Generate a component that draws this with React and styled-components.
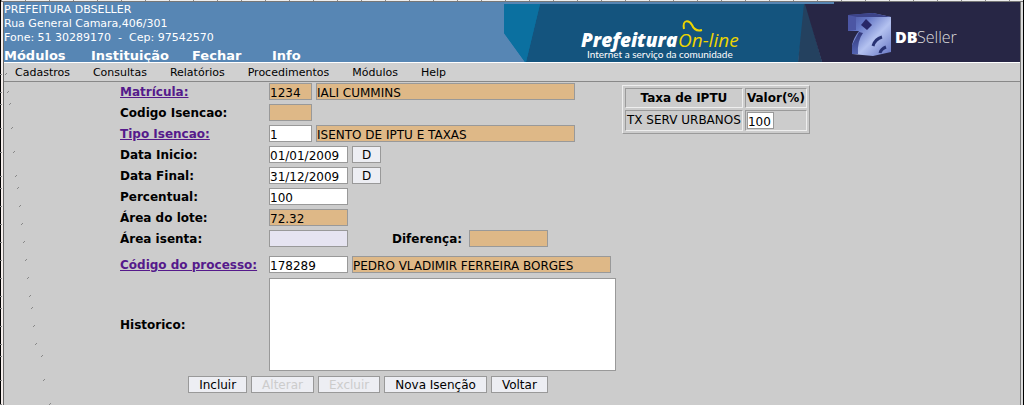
import React from "react";
import styled, { createGlobalStyle } from "styled-components";

const GlobalStyle = createGlobalStyle`
  html, body, #root { height: 100%; }
  body {
    margin: 0;
    background: #ccc;
    color: #000;
    font-family: "DejaVu Sans", sans-serif;
    font-size: 12px;
  }
  *, *::before, *::after { box-sizing: border-box; }
`;

const Frame = styled.div`
  position: relative;
  min-height: 100%;
  display: flex;
  flex-direction: column;
  border-left: 1px solid #000;
  border-right: 1px solid #000;
`;

const Ruler = styled.div`
  height: 2px;
  border-bottom: 1px solid #777;
  background: repeating-linear-gradient(to right, #888 0 1px, #eee 1px 24px);
`;

const Inner = styled.div`
  flex: 1;
  display: flex;
  flex-direction: column;
  border-left: 2px solid #f6efec;
  border-right: 2px solid #ddd;
`;

const Page = styled.div`
  flex: 1;
  border-left: 1px solid #666;
  border-right: 1px solid #777;
`;

const Header = styled.header`
  display: flex;
  justify-content: space-between;
  height: 60px;
  background: #5786b4;
  color: #fff;
`;

const HeaderInfo = styled.div`
  display: flex;
  flex-direction: column;
  justify-content: space-between;
  padding-top: 1px;
`;

const Address = styled.address`
  font-style: normal;
  font-size: 11px;
  line-height: 14px;
  white-space: pre;
`;

const MainNav = styled.nav`
  display: grid;
  grid-template-columns: 87px 101px 80px auto;
  font-size: 13px;
  font-weight: bold;
  line-height: 12px;
`;

const NavLink = styled.a`
  color: inherit;
  text-decoration: none;
`;

const Banner = styled.svg`
  display: block;
  flex: none;
`;

const MenuBar = styled.nav`
  display: flex;
  gap: 23px;
  height: 20px;
  padding: 0 11px;
  border-top: 1px solid #fff;
  border-bottom: 1px solid #888;
  background: #d0d0d0;
  font-size: 11px;
  line-height: 19px;
`;

const Content = styled.main`
  display: flex;
  align-items: flex-start;
  gap: 6px;
  padding: 1px 0 0 116px;
`;

const Form = styled.form`
  width: 496px;
`;

const Row = styled.div`
  display: grid;
  grid-template-columns: 149px 1fr;
  align-items: center;
  margin-bottom: ${(p) => p.$after || 4}px;
`;

const Fields = styled.div`
  display: flex;
  align-items: center;
  gap: 4px;
`;

const Label = styled.label`
  font-weight: bold;
  white-space: nowrap;
`;

const LabelLink = styled.a`
  color: #551a8b;
  font-weight: bold;
  white-space: nowrap;
`;

const widths = { code: 43, value: 79, name: 259, rate: 27 };

const Field = styled.input`
  display: block;
  width: ${(p) => widths[p.$size]}px;
  height: 17px;
  padding: 2px 0 0;
  border: 1px solid #999;
  border-radius: 0;
  outline: 0;
  background: ${(p) => p.$bg || "#fff"};
  color: #000;
  font: 12px/13px "DejaVu Sans", sans-serif;
`;

const Difference = styled.div`
  display: flex;
  align-items: center;
  gap: 7px;
  margin-left: 40px;
`;

const Notes = styled.textarea`
  display: block;
  width: 347px;
  height: 93px;
  border: 1px solid #999;
  border-radius: 0;
  outline: 0;
  resize: none;
  background: #fff;
  font: 12px "DejaVu Sans", sans-serif;
`;

const Button = styled.button`
  height: 17px;
  padding: 1px ${(p) => (p.$small ? 9 : 10)}px 0;
  border: 1px solid #999;
  border-radius: 0;
  background: #edeef3;
  color: #000;
  font: 12px/14px "DejaVu Sans", sans-serif;
  &:disabled { color: #ccc; }
`;

const Actions = styled.div`
  display: flex;
  justify-content: center;
  gap: 4px;
`;

const Rates = styled.table`
  margin-top: 2px;
  border: 1px outset #eee;
  border-spacing: 2px;
  th, td {
    height: 20px;
    padding: 1px;
    border: 1px inset #eee;
    line-height: 15px;
    text-align: left;
    white-space: nowrap;
  }
  th { text-align: center; }
`;

const Marks = styled.svg`
  position: absolute;
  top: 0;
  left: -1px;
  pointer-events: none;
`;

const tan = "#deb887";
const marks = [
  [5, 74], [7, 92], [9, 104], [11, 128], [13, 152], [15, 176], [17, 188],
  [19, 206], [21, 224], [23, 242], [25, 260], [27, 278], [29, 296], [31, 308],
  [33, 326], [35, 344], [41, 356], [43, 380], [49, 404],
];

function Logo() {
  return (
    <Banner width="516" height="60" viewBox="0 0 516 60" role="img" aria-label="Prefeitura On-line, DBSeller">
      <defs>
        <linearGradient id="cube" x1="0" y1="0" x2="1" y2="1">
          <stop offset="0" stopColor="#46509c" />
          <stop offset="0.3" stopColor="#6678c6" />
          <stop offset="0.6" stopColor="#b4c2f0" />
          <stop offset="1" stopColor="#6272c0" />
        </linearGradient>
        <linearGradient id="side" x1="0" y1="0" x2="0" y2="1">
          <stop offset="0" stopColor="#343a7c" />
          <stop offset="1" stopColor="#5364b2" />
        </linearGradient>
      </defs>
      <path d="M0 2H40L23 60H21L0 31Z" fill="#0b70a0" />
      <path d="M36 2H302L294 60H22Z" fill="#14547e" />
      <path d="M0 2H36L22 60H21L0 31Z" fill="#0b70a0" />
      <path d="M300 2H302L318 60H294Z" fill="#24415f" />
      <path d="M301 2H330V0H516V60H318Z" fill="#272645" />
      <text x="77" y="45" fill="#fff" fontFamily="Open Sans, sans-serif" fontStyle="italic" fontWeight="800" fontSize="19">Prefeitura</text>
      <text x="174" y="45" fill="#eed500" fontFamily="Open Sans, sans-serif" fontStyle="italic" fontSize="19">On-line</text>
      <path d="M180 27C178 17 185 18 188 23Q191 30 198 28" fill="none" stroke="#eed500" strokeWidth="2" />
      <text x="83" y="56" fill="#fff" fontFamily="Lato, sans-serif" fontSize="10">Internet a serviço da comunidade</text>
      <path d="M344 13L369 11L387 15V50L369 54L348 52V43Q350 35 355 29L344 29Z" fill="url(#cube)" />
      <path d="M344 13L352 14V28L344 29Z" fill="#4c56a4" />
      <path d="M348 43L355 30L359 31Q353 39 354 52L348 52Z" fill="url(#side)" />
      <path d="M344 13L369 11L387 15L353 15Z" fill="#3c4389" />
      <path d="M362 17L368 23L363 28L357 23Z" fill="#282768" />
      <path d="M369 44Q371 37 378 35M376 51Q377 47 382 45" fill="none" stroke="#283272" strokeWidth="3" />
      <text x="391" y="41" fill="#fff" fontFamily="Open Sans, sans-serif" fontWeight="800" fontSize="16">DB</text>
      <text x="413" y="41" fill="#ddd" fontFamily="Open Sans, sans-serif" fontWeight="300" fontSize="16">Seller</text>
    </Banner>
  );
}

export default function App() {
  return (
    <>
      <GlobalStyle />
      <Frame>
        <Ruler />
        <Inner>
          <Page>
            <Header>
              <HeaderInfo>
                <Address>{"PREFEITURA DBSELLER\nRua General Camara,406/301\nFone: 51 30289170  -  Cep: 97542570"}</Address>
                <MainNav>
                  {["Módulos", "Instituição", "Fechar", "Info"].map((t) => <NavLink href="#" key={t}>{t}</NavLink>)}
                </MainNav>
              </HeaderInfo>
              <Logo />
            </Header>
            <MenuBar>
              {["Cadastros", "Consultas", "Relatórios", "Procedimentos", "Módulos", "Help"].map((t) => <NavLink href="#" key={t}>{t}</NavLink>)}
            </MenuBar>
            <Content>
              <Form onSubmit={(e) => e.preventDefault()}>
                <Row>
                  <LabelLink href="#" id="matricula">Matrícula:</LabelLink>
                  <Fields>
                    <Field $size="code" $bg={tan} aria-labelledby="matricula" defaultValue="1234" />
                    <Field $size="name" $bg={tan} aria-label="Nome" readOnly value="IALI CUMMINS" />
                  </Fields>
                </Row>
                <Row>
                  <Label htmlFor="codigo">Codigo Isencao:</Label>
                  <Fields><Field id="codigo" $size="code" $bg={tan} readOnly /></Fields>
                </Row>
                <Row>
                  <LabelLink href="#" id="tipo">Tipo Isencao:</LabelLink>
                  <Fields>
                    <Field $size="code" aria-labelledby="tipo" defaultValue="1" />
                    <Field $size="name" $bg={tan} aria-label="Descrição" readOnly value="ISENTO DE IPTU E TAXAS" />
                  </Fields>
                </Row>
                <Row>
                  <Label htmlFor="inicio">Data Inicio:</Label>
                  <Fields><Field id="inicio" $size="value" defaultValue="01/01/2009" /><Button type="button" $small>D</Button></Fields>
                </Row>
                <Row>
                  <Label htmlFor="final">Data Final:</Label>
                  <Fields><Field id="final" $size="value" defaultValue="31/12/2009" /><Button type="button" $small>D</Button></Fields>
                </Row>
                <Row>
                  <Label htmlFor="percentual">Percentual:</Label>
                  <Fields><Field id="percentual" $size="value" defaultValue="100" /></Fields>
                </Row>
                <Row>
                  <Label htmlFor="lote">Área do lote:</Label>
                  <Fields><Field id="lote" $size="value" $bg={tan} readOnly value="72.32" /></Fields>
                </Row>
                <Row $after={9}>
                  <Label htmlFor="isenta">Área isenta:</Label>
                  <Fields>
                    <Field id="isenta" $size="value" $bg="#e6e4f1" />
                    <Difference>
                      <Label htmlFor="diferenca">Diferença:</Label>
                      <Field id="diferenca" $size="value" $bg={tan} readOnly />
                    </Difference>
                  </Fields>
                </Row>
                <Row $after={5}>
                  <LabelLink href="#" id="processo">Código do processo:</LabelLink>
                  <Fields>
                    <Field $size="value" aria-labelledby="processo" defaultValue="178289" />
                    <Field $size="name" $bg={tan} aria-label="Requerente" readOnly value="PEDRO VLADIMIR FERREIRA BORGES" />
                  </Fields>
                </Row>
                <Row $after={5}>
                  <Label htmlFor="historico">Historico:</Label>
                  <Notes id="historico" />
                </Row>
                <Actions>
                  <Button type="submit">Incluir</Button>
                  <Button type="button" disabled>Alterar</Button>
                  <Button type="button" disabled>Excluir</Button>
                  <Button type="button">Nova Isenção</Button>
                  <Button type="button">Voltar</Button>
                </Actions>
              </Form>
              <Rates>
                <thead><tr><th>Taxa de IPTU</th><th>Valor(%)</th></tr></thead>
                <tbody><tr><td>TX SERV URBANOS</td><td><Field $size="rate" aria-label="Valor(%)" defaultValue="100" /></td></tr></tbody>
              </Rates>
            </Content>
          </Page>
        </Inner>
        <Marks width="52" height="405" aria-hidden="true">
          {marks.map(([x, y]) => <path key={y} d={`M${x} ${y}.5h1M${x + 1} ${y - 1}.5h1M0 ${y}.5h2`} stroke="#888" />)}
        </Marks>
      </Frame>
    </>
  );
}
